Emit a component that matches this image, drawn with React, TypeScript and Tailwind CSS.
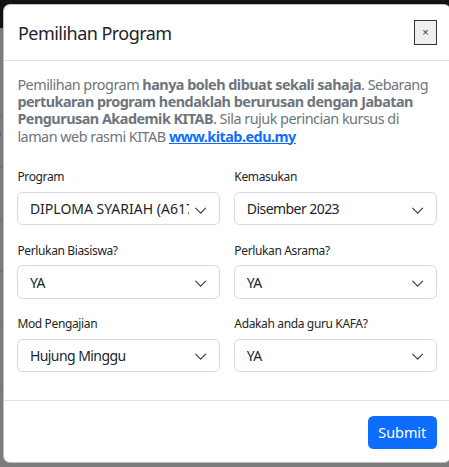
import React from "react";

const FONT = { fontFamily: '"Noto Sans", "Open Sans", Arial, sans-serif' };

function Chevron() {
  return (
    <svg width="13.3" height="10" viewBox="0 0 16 12" className="ml-[5px] mr-[11.5px] shrink-0">
      <path d="m2 5 6 6 6-6" fill="none" stroke="#343a40" strokeWidth="1.35" strokeLinecap="round" strokeLinejoin="round" />
    </svg>
  );
}

function Field({ label, value, wide }: { label: string; value: string; wide?: boolean }) {
  return (
    <div className="flex flex-col">
      <div className="h-[19px] text-[12px] leading-[19px] tracking-[-0.03em] text-[#212529]">{label}</div>
      <div className="mt-[5.5px] flex h-[33.5px] items-center rounded-[5.5px] border border-[#d6dadf] bg-white pl-[11.5px]">
        <div
          className={
            wide
              ? "min-w-0 flex-1 overflow-hidden whitespace-nowrap text-[14px] tracking-[0em] text-[#212529]"
              : "min-w-0 flex-1 overflow-hidden whitespace-nowrap text-[14px] tracking-[-0.04em] text-[#212529]"
          }
        >
          {value}
        </div>
        <Chevron />
      </div>
    </div>
  );
}

export default function App() {
  return (
    <div className="relative h-[467px] w-[449px] overflow-hidden bg-[#7b7b7b]" style={FONT}>
      {/* backdrop: dimmed page behind the modal */}
      <div className="absolute left-0 top-0 h-[28px] w-full bg-[#121212]" />
      <div className="absolute left-0 top-[133px] h-[3px] w-[1px] bg-[#3a6fb0]" />
      <div className="absolute left-0 top-[115px] h-[1px] w-[3px] bg-[#6f6f6f]" />
      <div className="absolute left-0 top-[167px] h-[1px] w-[3px] bg-[#6f6f6f]" />
      <div className="absolute left-0 top-[220px] h-[1px] w-[3px] bg-[#6f6f6f]" />
      <div className="absolute left-0 top-[271px] h-[1px] w-[3px] bg-[#6f6f6f]" />
      <div className="absolute left-0 top-[322px] h-[1px] w-[3px] bg-[#6f6f6f]" />
      <div className="absolute left-0 top-[386px] h-[1px] w-[3px] bg-[#6f6f6f]" />

      {/* modal */}
      <div className="absolute left-[3px] top-[4px] flex h-[459px] w-[448px] flex-col rounded-[7px] border border-black/25 bg-white">
        <div className="flex h-[56px] shrink-0 items-center justify-between border-b border-[#dee2e6] pl-[14px] pr-[13.4px]">
          <div className="text-[18px] leading-[22px] tracking-[-0.03em] text-[#212529]">Pemilihan Program</div>
          <button className="flex h-[25px] w-[22.4px] items-center justify-center border border-[#333] bg-[#efefef] text-[11px] leading-none text-[#333]" style={{ fontFamily: '"Liberation Sans", Arial, sans-serif' }}>
            ×
          </button>
        </div>

        <div className="flex-1 px-[13.4px] pt-[14.8px]">
          <p className="whitespace-nowrap text-[14.4px] leading-[17.3px] tracking-[-0.035em] text-[#6c757d]">
            Pemilihan program <b className="font-bold">hanya boleh dibuat sekali sahaja</b>. Sebarang
            <br />
            <b className="font-bold">pertukaran program hendaklah berurusan dengan Jabatan</b>
            <br />
            <b className="font-bold">Pengurusan Akademik KITAB</b>. Sila rujuk perincian kursus di
            <br />
            laman web rasmi KITAB{" "}
            <a className="font-bold text-[#0d6efd] underline">www.kitab.edu.my</a>
          </p>

          <div className="mt-[22.5px] grid grid-cols-2 gap-x-[14.7px] gap-y-[15.3px]">
            <Field label="Program" value="DIPLOMA SYARIAH (A6172)" wide />
            <Field label="Kemasukan" value="Disember 2023" />
            <Field label="Perlukan Biasiswa?" value="YA" />
            <Field label="Perlukan Asrama?" value="YA" />
            <Field label="Mod Pengajian" value="Hujung Minggu" />
            <Field label="Adakah anda guru KAFA?" value="YA" />
          </div>
        </div>

        <div className="flex h-[62px] shrink-0 items-start justify-end border-t border-[#dee2e6] pr-[13.4px] pt-[15px]">
          <button className="flex h-[33.3px] w-[68.7px] items-center justify-center rounded-[5.5px] bg-[#0d6efd] text-[14.4px] text-white">
            Submit
          </button>
        </div>
      </div>
    </div>
  );
}
